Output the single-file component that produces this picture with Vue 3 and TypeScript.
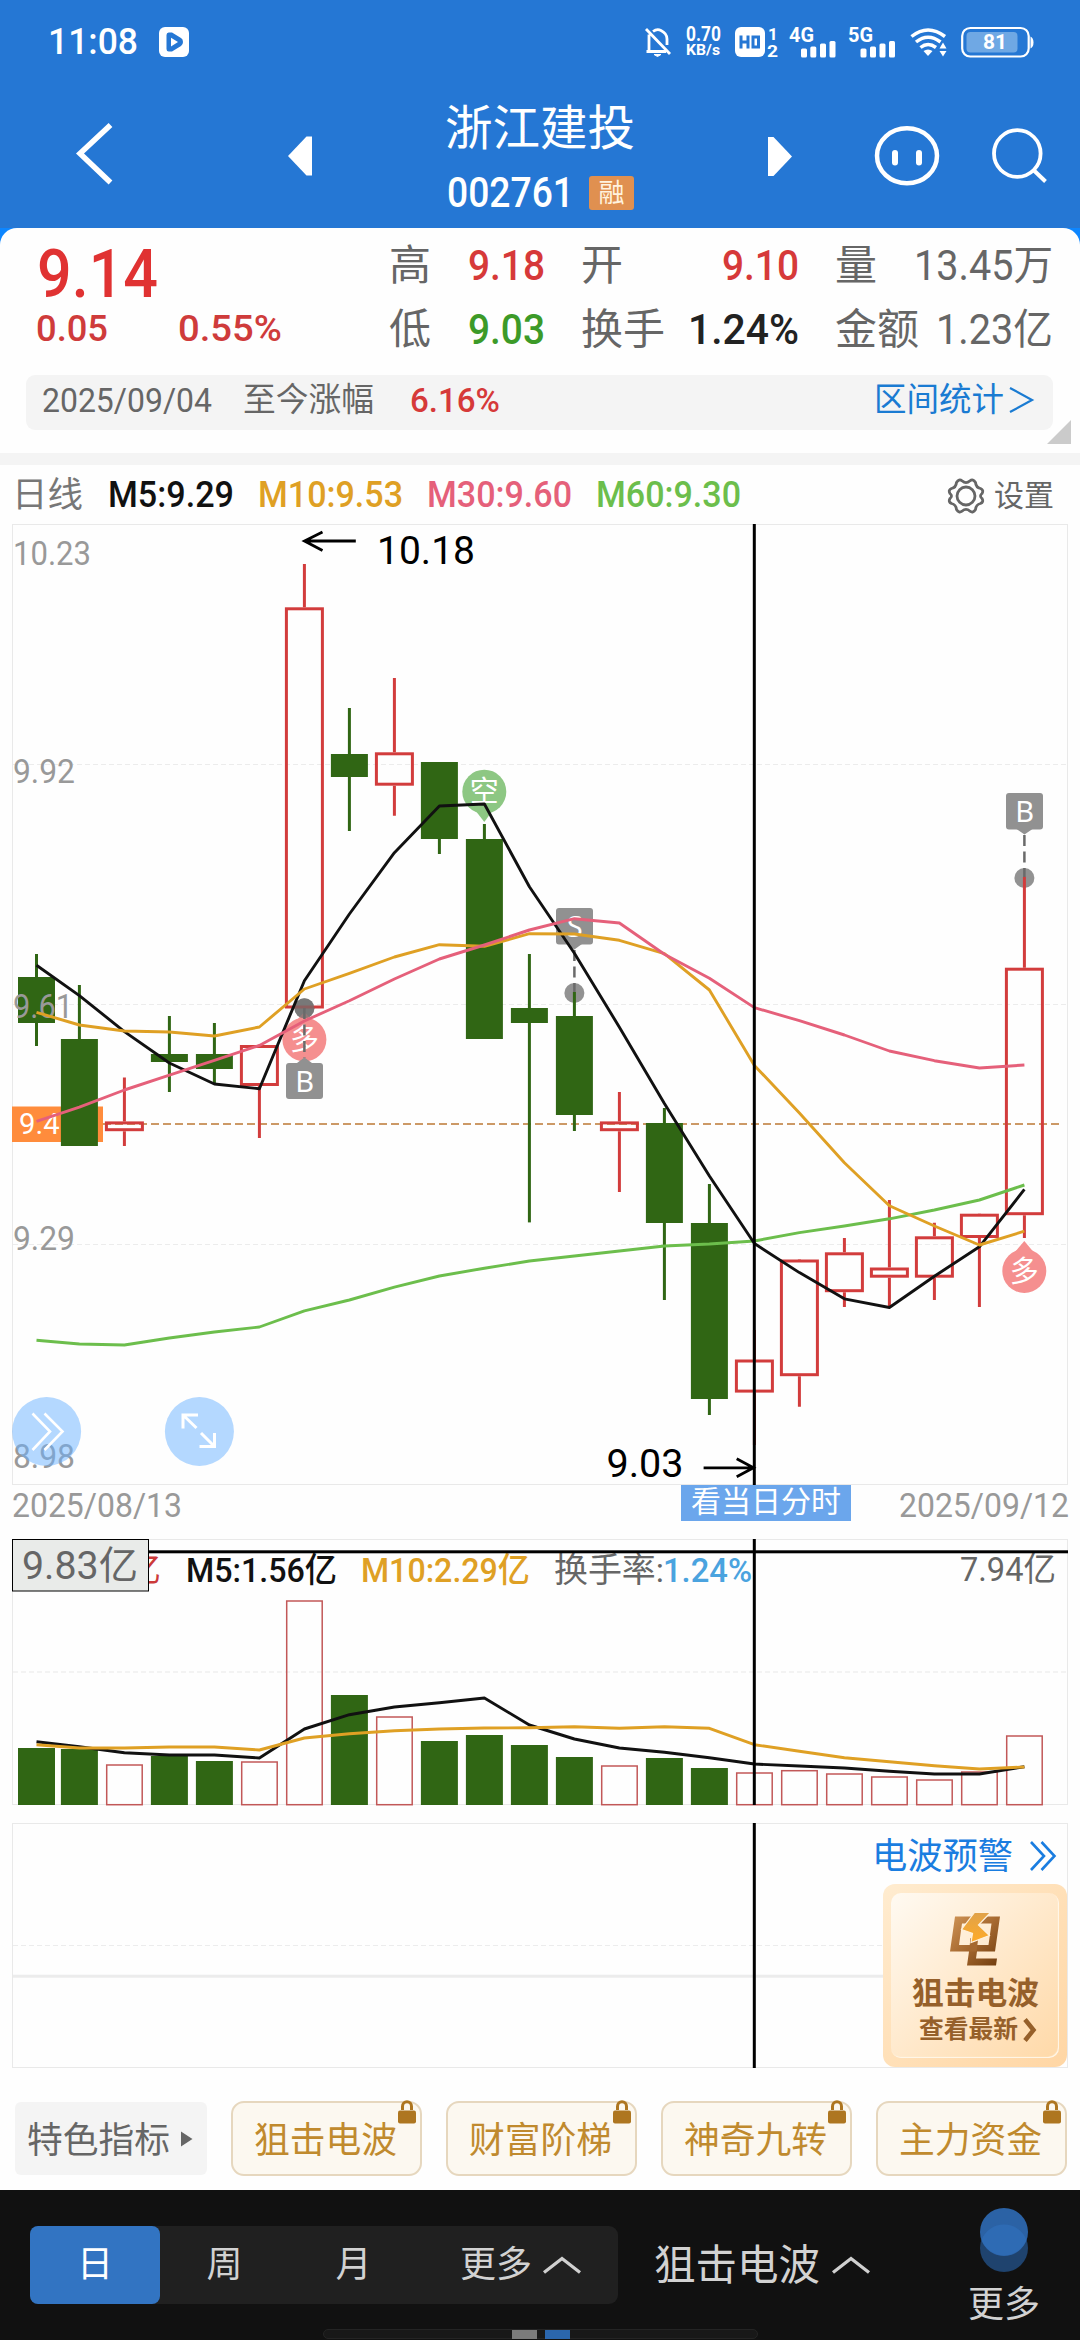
<script setup lang="ts">
type Candle = [up: boolean, high: number, top: number, bottom: number, low: number]

// Stretches or condenses a text run to a fixed width while keeping it in flow.
const vFit = {
  mounted(el: HTMLElement, binding: { value: number }) {
    const natural = el.getBoundingClientRect().width
    if (!natural) return
    el.style.transform = `scaleX(${binding.value / natural})`
    el.style.marginRight = `${binding.value - natural}px`
  },
}

const candles: Candle[] = [
  [false, 954, 977, 1023, 1046],
  [false, 985, 1039, 1146, 1146],
  [true, 1077.4, 1121.4, 1131.2, 1146],
  [false, 1016, 1054, 1062, 1092],
  [false, 1023, 1054, 1069, 1084],
  [true, 1045, 1045, 1086, 1138],
  [true, 564, 607.3, 1008.5, 1008],
  [false, 708, 754, 777, 831],
  [true, 678, 752.3, 785.7, 815.7],
  [false, 762, 762, 839, 854],
  [false, 824, 839, 1039, 1039],
  [false, 954, 1008, 1023, 1222.4],
  [false, 992, 1016, 1115, 1131],
  [true, 1092, 1121.4, 1131.2, 1192],
  [false, 1108, 1123, 1223, 1300],
  [false, 1184, 1223, 1399, 1415],
  [true, 1330, 1359.5, 1392.6, 1445],
  [true, 1260, 1259.5, 1376.2, 1406.7],
  [true, 1238, 1252.3, 1292.2, 1307],
  [true, 1200, 1267.5, 1277.7, 1307],
  [true, 1222.8, 1236.3, 1277.7, 1300],
  [true, 1214, 1213.7, 1238, 1307],
  [true, 876.7, 967.7, 1215.2, 1238],
]
const cx = (i: number): number => (i === 0 ? 36.5 : 79.4 + 45 * (i - 1))
const line = (ys: number[]): string => ys.map((y, i) => `${cx(i).toFixed(1)},${y}`).join(' ')

const ma5 = line([965.3, 995.6, 1031.6, 1063, 1084, 1088.7, 980.7, 914, 852.7, 806, 804, 886.7, 953.3, 1027.2, 1103.6, 1176, 1243.5, 1272.6, 1298.8, 1307.5, 1276.2, 1246.8, 1189.4])
const ma10 = line([1012.3, 1025, 1031, 1032, 1036, 1027, 989, 973.3, 957, 944.7, 946.3, 933.7, 934, 940.3, 953.7, 990, 1065.4, 1113, 1162.8, 1205.7, 1226, 1245, 1231.2])
const ma30 = line([1121.4, 1107.2, 1090, 1075.2, 1060.3, 1045.4, 1021, 1000.7, 979, 959, 945, 930, 918.7, 923, 954.3, 978.3, 1007.6, 1020.7, 1035, 1051, 1060.7, 1068, 1065])
const ma60 = line([1340.2, 1344, 1345, 1338, 1332, 1327, 1310.8, 1300, 1287.2, 1276, 1268.2, 1261, 1256, 1251, 1246, 1244, 1241, 1232.6, 1226, 1218.8, 1210, 1200, 1185])

const volumeTops = [1748, 1749, 1764.3, 1756, 1761, 1761.3, 1600.3, 1695, 1716.3, 1741, 1735, 1745, 1757, 1765.3, 1758, 1768, 1772.3, 1770, 1773.3, 1776.3, 1779.3, 1771.3, 1735.3]
const vol5 = line([1741.7, 1746.7, 1752.7, 1755, 1755, 1758, 1729, 1714.7, 1707, 1702.7, 1698, 1725, 1739, 1748, 1752.3, 1757.7, 1764, 1766, 1768, 1771.3, 1774, 1774, 1766.7])
const vol10 = line([1744.7, 1748, 1748, 1747, 1747, 1750, 1738, 1733.7, 1730.7, 1729, 1728, 1727.7, 1726.7, 1728.3, 1726.7, 1728.3, 1744.7, 1751.3, 1757.7, 1761.7, 1765.7, 1769, 1767])

const axis = [
  { t: '10.23', y: 565, w: 78 },
  { t: '9.92', y: 783, w: 62 },
  { t: '9.61', y: 1017.5, w: 60 },
  { t: '9.29', y: 1250, w: 62 },
  { t: '8.98', y: 1467.5, w: 62 },
]
const legend = [
  { t: 'M5:9.29', c: 'k', w: 126 },
  { t: 'M10:9.53', c: 'o', w: 145 },
  { t: 'M30:9.60', c: 'p', w: 145 },
  { t: 'M60:9.30', c: 'g', w: 145 },
]
const stats = [
  { l: '高', v: '9.18', c: 'red', w: 77 },
  { l: '开', v: '9.10', c: 'red', w: 77 },
  { l: '量', v: '13.45万', c: 'grey', w: 139 },
  { l: '低', v: '9.03', c: 'green', w: 77 },
  { l: '换手', v: '1.24%', c: 'dark', w: 111 },
  { l: '金额', v: '1.23亿', c: 'grey', w: 117 },
]
const locked = ['狙击电波', '财富阶梯', '神奇九转', '主力资金']
</script>

<template>
  <div class="screen">
    <div class="status">
      <span v-fit="90" class="fit clock">11:08</span>
      <svg class="app-ico" width="30" height="30" viewBox="0 0 30 30">
        <rect width="30" height="30" rx="6" fill="#fff" />
        <path d="M7.500 8q0-2.500 2.200-2.500h3.300l9 5.500q2 1.200 2 4t-2 4l-9 5.500h-3.300q-2.200 0-2.200-2.500z" fill="#2577d4" />
        <path d="M12 10.800v8.600l7-4.300z" fill="#fff" />
      </svg>
      <div class="icons">
        <svg width="28" height="32" viewBox="0 0 28 32" fill="none" stroke="#fff" stroke-width="2.800">
          <path d="M2 3L26 28M5 8.500V25M2.500 25.500H22M9 5.500Q13 2.500 17 4.500Q23 7.500 23 13V19" />
          <path d="M10 28.500h7l-3.500 2z" fill="#fff" stroke-width="1" />
        </svg>
        <div class="speed"><span v-fit="35" class="fit">0.70</span><span v-fit="34" class="fit small">KB/s</span></div>
        <svg width="43" height="32" viewBox="0 0 43 32">
          <rect x="0" y="1" width="30" height="30" rx="6" fill="#fff" />
          <path d="M6 9.500v13M13 9.500v13M6 16h7M18 11h5.500v10h-5.500z" stroke="#2577d4" stroke-width="3" fill="none" />
          <text x="33" y="14" class="tiny" font-size="17">1</text>
          <text x="32" y="30.500" class="tiny" font-size="16" textLength="11" lengthAdjust="spacingAndGlyphs">2</text>
        </svg>
        <svg class="cell" width="48" height="32" viewBox="0 0 48 32">
          <text x="0" y="16" class="tiny" font-size="20" textLength="25" lengthAdjust="spacingAndGlyphs">4G</text>
          <g fill="#fff"><rect x="12" y="22.500" width="6" height="9" rx="1.500" /><rect x="21.300" y="20.500" width="6" height="11" rx="1.500" /><rect x="31" y="17.500" width="6" height="14" rx="1.500" /><rect x="40.500" y="15" width="6" height="16.500" rx="1.500" /></g>
        </svg>
        <svg class="cell" width="48" height="32" viewBox="0 0 48 32">
          <text x="0" y="16" class="tiny" font-size="20" textLength="25" lengthAdjust="spacingAndGlyphs">5G</text>
          <g fill="#fff"><rect x="12.500" y="22.500" width="6" height="9" rx="1.500" /><rect x="22" y="20.500" width="6" height="11" rx="1.500" /><rect x="31.500" y="17.500" width="6" height="14" rx="1.500" /><rect x="41" y="15" width="6" height="16.500" rx="1.500" /></g>
        </svg>
        <svg width="38" height="32" viewBox="0 0 38 32" fill="none" stroke="#fff" stroke-width="3.500">
          <path d="M1.500 10.500Q18 -2.500 35 10.500M6 16Q18 6.500 30.500 16M10.500 21.500Q18 15.500 26 21.500" />
          <path d="M13.500 25Q18 22 22.500 25L18 30z" fill="#fff" stroke="none" />
          <path d="M29.500 22.500l3.500-6 3.500 6zM29.500 25l3.500 5.500 3.500-5.500z" fill="#fff" stroke="none" />
        </svg>
        <svg class="battery" width="73" height="32" viewBox="0 0 73 32">
          <rect x="1.200" y="2" width="66.500" height="28.500" rx="8" fill="none" stroke="#fff" stroke-width="2.200" />
          <path d="M69.500 10.500q3 1.500 3 6t-3 6z" fill="#fff" />
          <rect x="5.500" y="6" width="51" height="20.500" rx="4" fill="#6fa8e4" />
          <text x="34" y="23" text-anchor="middle" class="tiny" font-size="20" textLength="24" lengthAdjust="spacingAndGlyphs">81</text>
        </svg>
      </div>
    </div>

    <header class="head">
      <svg width="40" height="70" viewBox="74 119 40 70"><path d="M110.500 125L80 153.500l30.500 29" fill="none" stroke="#fff" stroke-width="5.500" /></svg>
      <svg class="prev" width="24" height="40" viewBox="0 0 24 40"><path d="M0 20L18.500.500H24v39h-5.500z" fill="#fff" /></svg>
      <div class="title">
        <div v-fit="190" class="fit name">浙江建投</div>
        <div class="code"><span v-fit="127" class="fit">002761</span><b>融</b></div>
      </div>
      <svg class="next" width="24" height="40" viewBox="0 0 24 40"><path d="M24 20.500L5.500 1H0v39h5.500z" fill="#fff" /></svg>
      <svg class="face" width="66" height="62" viewBox="874 125 66 62"><ellipse cx="907" cy="155.800" rx="30" ry="27.500" fill="none" stroke="#fff" stroke-width="4.500" /><rect x="892" y="150" width="6" height="15.500" rx="3" fill="#fff" /><rect x="916" y="150" width="6" height="15.500" rx="3" fill="#fff" /></svg>
      <svg class="find" width="56" height="58" viewBox="991 127 56 58"><circle cx="1017.300" cy="153.500" r="23.300" fill="none" stroke="#fff" stroke-width="3.800" /><path d="M1034 170.500L1045.500 181.500" stroke="#fff" stroke-width="4" /></svg>
    </header>

    <section class="corner"><div class="quote">
      <div class="summary">
        <div class="last">
          <div v-fit="121" class="fit big">9.14</div>
          <div class="chg"><span v-fit="72" class="fit">0.05</span><span v-fit="104" class="fit pct">0.55%</span></div>
        </div>
        <div class="stats">
          <div v-for="s in stats" :key="s.l" class="stat"><span>{{ s.l }}</span><span v-fit="s.w" class="fit r" :class="s.c">{{ s.v }}</span></div>
        </div>
      </div>
      <div class="interval">
        <span v-fit="170" class="fit">2025/09/04</span>
        <span v-fit="131" class="fit since">至今涨幅</span>
        <span v-fit="90" class="fit red six">6.16%</span>
        <span class="link"><span v-fit="130" class="fit">区间统计</span><svg width="26" height="28" viewBox="0 0 26 28"><path d="M1 2L23 14L1 26" fill="none" stroke="#1a7bd2" stroke-width="2.200" /></svg></span>
      </div>
      <i class="fold"></i>
    </div></section>
    <div class="strip"></div>

    <div class="legend">
      <span v-fit="71" class="fit day">日线</span>
      <span v-for="l in legend" :key="l.t" v-fit="l.w" class="fit ma" :class="l.c">{{ l.t }}</span>
      <span class="set">
        <svg width="38" height="38" viewBox="-19 -19 38 38" fill="none" stroke="#666" stroke-width="2.800"><circle r="9" /><path d="M-4 -15.200Q0 -11.600 4 -15.200Q7 -17.500 9.500 -13.500Q10 -8.500 14.500 -7.500Q18 -6 16 -2.500Q13 0 16 2.500Q18 6 14.500 7.500Q10 8.500 9.500 13.500Q7 17.500 4 15.200Q0 11.600 -4 15.200Q-7 17.500 -9.500 13.500Q-10 8.500 -14.500 7.500Q-18 6 -16 2.500Q-13 0 -16 -2.500Q-18 -6 -14.500 -7.500Q-10 -8.500 -9.500 -13.500Q-7 -17.500 -4 -15.200z" /></svg>
        <span v-fit="60" class="fit">设置</span>
      </span>
    </div>

    <svg class="chart" width="1080" height="961" viewBox="0 524 1080 961">
      <rect x="12.500" y="524.500" width="1055" height="960" class="frame" />
      <path d="M13 764.500H1067M13 1004.500H1067M13 1244.500H1067" class="grid" />
      <rect x="12" y="1106.500" width="91" height="35.500" fill="#ff8c3c" />
      <text x="19" y="1134" class="tag" textLength="57" lengthAdjust="spacingAndGlyphs">9.45</text>
      <path d="M103 1124H1062" stroke="#cc9966" stroke-width="2" stroke-dasharray="8 4" />

      <g fill="#6e6e6e" fill-opacity=".75">
        <circle :cx="cx(6)" cy="1008.300" r="10" /><circle :cx="cx(12)" cy="993" r="10" /><circle :cx="cx(22)" cy="878" r="10" />
      </g>
      <template v-for="(c, i) in candles" :key="i">
        <g v-if="c[0]" stroke="#d23c3c" stroke-width="3" fill="none">
          <path :d="`M${cx(i)} ${c[1]}V${c[2]}M${cx(i)} ${c[3]}V${c[4]}`" />
          <rect :x="cx(i) - 18" :y="c[2] + 1.5" width="36" :height="c[3] - c[2] - 3" />
        </g>
        <g v-else fill="#306614">
          <rect :x="cx(i) - 1.500" :y="c[1]" width="3" :height="c[4] - c[1]" />
          <rect :x="cx(i) - 18.500" :y="c[2]" width="37" :height="c[3] - c[2]" />
        </g>
      </template>
      <text v-for="a in axis" :key="a.t" x="13" :y="a.y" class="axis" :textLength="a.w" lengthAdjust="spacingAndGlyphs">{{ a.t }}</text>

      <g class="bubble">
        <path d="M475 810L484.300 822L493 810z" fill="#8dc783" /><circle cx="484.300" cy="791.700" r="22" fill="#8dc783" /><text x="484.300" y="802">空</text>
        <circle cx="304.400" cy="1039.500" r="22" fill="#f58f8f" /><path d="M295 1022L304.400 1012L314 1022z" fill="#f58f8f" /><text x="304.400" y="1050">多</text>
        <path d="M1015 1252L1024.300 1241L1033.500 1252z" fill="#f58f8f" /><circle cx="1024.300" cy="1271" r="22" fill="#f58f8f" /><text x="1024.300" y="1281.500">多</text>
      </g>
      <circle :cx="cx(6)" cy="1008.300" r="10" fill="#6e6e6e" fill-opacity=".7" />
      <g stroke="#6a6a6a" stroke-width="2.500" stroke-dasharray="11 5.500">
        <path d="M304.400 1008V1058M574.400 950V992M1024.400 835V877" />
      </g>
      <g class="mark">
        <path d="M297 1063l7.400-5.500 7.600 5.500zM567 944l7.400 5.500 7.600-5.500zM1016.500 829l8 5.500 8-5.500z" />
        <rect x="286" y="1063" width="37" height="36" rx="3" /><text x="304.600" y="1092">B</text>
        <rect x="556" y="908" width="37" height="36.500" rx="3" /><text x="574.600" y="937">S</text>
        <rect x="1006" y="793" width="37" height="36.500" rx="3" /><text x="1024.600" y="822">B</text>
      </g>

      <g fill="none" stroke-width="2.900" stroke-linejoin="round">
        <polyline :points="ma60" stroke="#6cbe4c" />
        <polyline :points="ma5" stroke="#111" />
        <polyline :points="ma10" stroke="#dfa024" />
        <polyline :points="ma30" stroke="#e5607a" />
      </g>

      <path d="M355.800 541H304.500M322.500 532L304.500 541L322.500 550.500M703.600 1467.800H754M736.700 1458.700L753.500 1467.800L736.700 1476.800" fill="none" stroke="#000" stroke-width="2.800" />
      <text x="377" y="564" class="extreme" textLength="98" lengthAdjust="spacingAndGlyphs">10.18</text>
      <text x="606.500" y="1476.500" class="extreme" textLength="77" lengthAdjust="spacingAndGlyphs">9.03</text>
      <rect x="752.800" y="524" width="3" height="961" />

      <g fill="#6ab1ff" fill-opacity=".5"><circle cx="46.600" cy="1431.500" r="34.500" /><circle cx="199.400" cy="1431.500" r="34.500" /></g>
      <g fill="none" stroke="#fff" stroke-width="2.600">
        <path d="M32.500 1413.500L50 1431.500L32.500 1450M44.500 1413.500L62.500 1431.500L44.500 1450" />
        <path d="M198 1415H183V1428.500M183 1415L196.500 1428M199.500 1446.500H214.500V1433M214.500 1446.500L201 1433" stroke-width="3" />
      </g>
    </svg>

    <div class="dates"><span v-fit="170" class="fit">2025/08/13</span><span class="today"><span v-fit="150" class="fit">看当日分时</span></span><span v-fit="170" class="fit">2025/09/12</span></div>

    <svg class="chart" width="1080" height="267" viewBox="0 1539 1080 267">
      <rect x="12.500" y="1539.500" width="1055" height="265" class="frame" />
      <path d="M13 1672H1067" class="grid half" />
      <template v-for="(t, i) in volumeTops" :key="i">
        <rect v-if="candles[i][0]" :x="cx(i) - 17.700" :y="t + .7" width="35.500" :height="1804 - t" fill="none" stroke="#c25858" stroke-width="1.500" />
        <rect v-else :x="cx(i) - 18.500" :y="t" width="37" :height="1805 - t" fill="#306614" />
      </template>
      <g fill="none" stroke-width="2.900" stroke-linejoin="round">
        <polyline :points="vol5" stroke="#111" /><polyline :points="vol10" stroke="#dfa024" />
      </g>
      <g class="vtext">
        <text x="127" y="1581.500" fill="#cc3a3a">亿</text>
        <text x="186" y="1581.500" fill="#111" class="m" textLength="151" lengthAdjust="spacingAndGlyphs">M5:1.56亿</text>
        <text x="361" y="1581.500" fill="#dfa024" class="m" textLength="169" lengthAdjust="spacingAndGlyphs">M10:2.29亿</text>
        <text x="554" y="1581.500" fill="#666" textLength="110" lengthAdjust="spacingAndGlyphs">换手率:</text>
        <text x="663" y="1581.500" fill="#4aa3df" class="m" textLength="89" lengthAdjust="spacingAndGlyphs">1.24%</text>
        <text x="960" y="1581" fill="#666" textLength="96" lengthAdjust="spacingAndGlyphs">7.94亿</text>
      </g>
      <rect x="149" y="1550.300" width="919" height="3" /><rect x="752.800" y="1539" width="3" height="266" />
      <rect x="12.500" y="1539.500" width="136" height="51.500" fill="#e9ebe9" stroke="#000" />
      <text x="22" y="1579" class="cursor" textLength="116" lengthAdjust="spacingAndGlyphs">9.83亿</text>
    </svg>

    <section class="alert">
      <svg width="1080" height="246" viewBox="0 1823 1080 246">
        <rect x="12.500" y="1823.500" width="1055" height="244" class="frame" />
        <path d="M13 1945.500H1067" class="grid" /><path d="M13 1976.300H1067" stroke="#ececec" stroke-width="3" /><rect x="752.800" y="1823" width="3" height="245" />
      </svg>
      <div class="alert-side">
        <div class="alert-link"><span v-fit="141" class="fit">电波预警</span><svg width="28" height="32" viewBox="0 0 28 32" fill="none" stroke="#1a7de0" stroke-width="2.600"><path d="M2 2L15 16L2 30M12.500 2L25.500 16L12.500 30" /></svg></div>
        <div class="card"><div class="inner">
          <svg width="52" height="56" viewBox="0 0 52 56">
            <defs><linearGradient id="brown" x1="0" y1="0" x2="1" y2="1"><stop offset="0" stop-color="#d09456" /><stop offset=".5" stop-color="#a5682f" /><stop offset="1" stop-color="#6f3c0e" /></linearGradient><linearGradient id="gold" x1="0" y1="0" x2="0" y2="1"><stop offset="0" stop-color="#e0a24a" /><stop offset="1" stop-color="#ffab28" /></linearGradient></defs>
            <path d="M6 5.500H51L46 40.500H28L27 47.500H48L47 54.500H18L20 40.500H1zM13 12.500L10 34H39.500L42.500 12.500z" fill="url(#brown)" fill-rule="evenodd" />
            <path d="M21.500 27L20 40.500H27.500L29 29z" fill="#a5682f" />
            <path d="M25.500 1.500H41.500L29.500 14L40.500 24.500L22 31.500L23.500 22.500L12.500 18.500z" fill="url(#gold)" stroke="#fff1dc" stroke-width="1.200" />
          </svg>
          <div v-fit="127" class="fit c1">狙击电波</div>
          <div class="c2"><span v-fit="99" class="fit">查看最新</span><svg width="14" height="26" viewBox="0 0 14 26"><path d="M2 2.500L10.500 13L2 23.500" fill="none" stroke="#96602a" stroke-width="4.500" /></svg></div>
        </div></div>
      </div>
    </section>

    <div class="pills">
      <div class="feature"><span v-fit="143" class="fit lbl">特色指标</span><svg width="12" height="16" viewBox="0 0 12 16"><path d="M0 .500L11.500 8L0 15.500z" fill="#666" /></svg></div>
      <div v-for="p in locked" :key="p" class="pill"><span v-fit="143" class="fit lbl">{{ p }}</span><svg width="18" height="24" viewBox="0 0 18 24"><path d="M4.500 10V6.500a4.500 4.800 0 0 1 9 0V10" fill="none" stroke="#ae7620" stroke-width="3" /><rect y="10.500" width="18" height="13" rx="2" fill="#ae7620" /></svg></div>
    </div>

    <footer class="nav">
      <div class="seg">
        <span class="on">日</span><span>周</span><span>月</span>
        <span class="more">更多<svg width="40" height="20" viewBox="0 0 40 20"><path d="M2 17.500L20 3.500L38 17.500" fill="none" stroke="#d0d0d0" stroke-width="3.300" /></svg></span>
      </div>
      <div class="ind"><span v-fit="166" class="fit">狙击电波</span><svg width="40" height="20" viewBox="0 0 40 20"><path d="M2 17.500L20 3.500L38 17.500" fill="none" stroke="#d0d0d0" stroke-width="3.300" /></svg></div>
      <div class="extra">
        <svg width="48" height="64" viewBox="0 0 48 64"><circle cx="24" cy="40" r="24" fill="#1f436e" /><circle cx="24" cy="24" r="24" fill="#2b62a5" /><path d="M1.600 32A24 24 0 0 1 46.400 32A24 24 0 0 1 1.600 32z" fill="#2e6bb4" /></svg>
        <span>更多</span>
      </div>
      <div class="pager"><i></i><i class="cur"></i></div>
    </footer>
  </div>
</template>

<style>
body { margin: 0; background: #fff; }
</style>

<style scoped>
.screen { width: 1080px; height: 2340px; overflow: hidden; position: relative; background: #fefefe; font-family: Roboto, "Noto Sans CJK SC", sans-serif; color: #666; display: flex; flex-direction: column; }
.screen > * { flex: none; }
svg { display: block; flex: none; overflow: visible; }
.fit { display: inline-block; white-space: nowrap; transform-origin: 0 50%; flex: none; }
.status { height: 84px; background: #2577d4; color: #fff; display: flex; align-items: center; padding: 0 46px 0 48px; box-sizing: border-box; }
.clock { font-size: 37px; font-weight: 500; line-height: 84px; }
.app-ico { margin-left: 21px; }
.icons { margin-left: auto; display: flex; align-items: center; }
.icons > * + * { margin-left: 14px; }
.speed { width: 35px; display: flex; flex-direction: column; align-items: flex-start; font-size: 19.5px; line-height: 16px; font-weight: 700; }
.speed .small { font-size: 15.5px; line-height: 14px; }
.icons .cell { margin-left: 11px; }
.icons .battery { margin-left: 13px; }
.tiny { fill: #fff; font-weight: 700; }
.head { height: 144px; background: #2577d4; color: #fff; display: flex; box-sizing: border-box; padding-left: 74px; align-items: flex-start; }
.head > svg:first-child { margin-top: 35px; }
.prev { margin: 51.5px 0 0 174px; }
.title { width: 190px; margin-left: 133px; margin-top: 10px; }
.name { font-size: 48px; line-height: 70px; height: 70px; display: block; width: max-content; }
.code { display: flex; align-items: center; height: 60px; margin-top: -1px; padding-left: 2px; line-height: 60px; font-size: 42px; font-weight: 500; }
.code b { font-weight: 400; font-size: 26px; line-height: 34px; width: 45px; text-align: center; background: #e09050; color: #fff3df; border-radius: 3px; margin-left: 15px; }
.next { margin: 52px 0 0 133px; }
.face { margin: 41px 0 0 82px; }
.find { margin: 43px 0 0 51px; }
.corner { background: #0d86ff; }
.quote { height: 225px; background: #fefefe; border-radius: 17px 17px 0 0; box-sizing: border-box; padding: 5px 27px 0 26px; position: relative; }
.summary { display: flex; height: 142px; }
.last { width: 365px; color: #e03232; padding-left: 10px; box-sizing: border-box; }
.big { display: block; width: max-content; font-size: 66px; font-weight: 500; line-height: 68px; height: 71px; padding-top: 8px; box-sizing: border-box; padding-bottom: 0; height: 77px; margin-left: 1px; }
.chg { display: flex; color: #cf3b3b; font-size: 37.5px; font-weight: 500; line-height: 36px; }
.pct { margin-left: 70px; }
.stats { display: grid; grid-template-columns: 156px 218px 218px; column-gap: 36px; grid-auto-rows: 64px; line-height: 66px; font-size: 42px; margin-left: -2px; margin-right: -4px; }
.stat { display: flex; justify-content: space-between; }
.stat .fit { font-weight: 500; }
.stat .grey { font-weight: 400; }
.red { color: #d63939; } .green { color: #3c9a28; } .dark { color: #222; }
.interval { height: 55px; box-sizing: border-box; background: #f4f4f4; border-radius: 9px; display: flex; align-items: center; padding: 0 18px 5px 16px; font-size: 34px; line-height: 50px; }
.since { margin-left: 31px; font-size: 33px; } .six { margin-left: 36px; font-weight: 500; }
.link { margin-left: auto; display: flex; align-items: center; gap: 5px; color: #1a7bd2; font-size: 33px; }
.fold { position: absolute; right: 9px; bottom: 9px; border: 12px solid transparent; border-right-color: #cbcbcb; border-bottom-color: #cbcbcb; }
.strip { height: 12px; background: #f4f4f4; }
.legend { height: 59px; box-sizing: border-box; display: flex; align-items: center; padding: 2px 26px 0 12px; font-size: 36px; line-height: 57px; }
.day { color: #777; font-size: 35px; }
.ma { font-weight: 500; margin-left: 24px; }
.day + .ma { margin-left: 25px; }
.k { color: #111; } .o { color: #dfa024; } .p { color: #e5607a; } .g { color: #6cbe4c; }
.set { margin-left: auto; display: flex; align-items: center; gap: 9px; font-size: 30px; }
.frame { fill: none; stroke: #e9e9e9; }
.grid { fill: none; stroke: #ececec; stroke-dasharray: 5 3; }
.half { stroke: #f3f3f3; stroke-width: 2; }
.tag { fill: #fff; font-size: 29px; }
.axis { fill: #999; font-size: 34px; }
.bubble text { fill: #fff; font-size: 29px; text-anchor: middle; }
.mark { fill: #919191; }
.mark text { fill: #fff; font: 29px "Noto Sans", sans-serif; text-anchor: middle; }
.extreme { fill: #000; font-size: 38px; }
.dates { height: 54px; display: flex; padding: 0 11px 0 12px; align-items: flex-start; line-height: 40px; font-size: 34px; color: #999; }
.today { margin-left: 499px; margin-right: auto; width: 170px; height: 35.5px; line-height: 33px; background: #6ba6ec; color: #fff; font-size: 30px; box-sizing: border-box; padding-left: 10px; }
.vtext { font-size: 34px; } .vtext .m { font-weight: 500; }
.cursor { fill: #666; font-size: 39px; }
.alert { margin-top: 17px; position: relative; height: 246px; }
.alert-side { position: absolute; right: 13px; top: 0; display: flex; flex-direction: column; align-items: flex-end; }
.alert-link { height: 61px; display: flex; align-items: center; gap: 16px; color: #1a7de0; font-size: 36px; line-height: 54px; padding-right: 10px; box-sizing: border-box; padding-top: 7px; }
.alert-link svg { margin-top: -2px; }
.card { width: 184px; height: 183px; border-radius: 12px; background: linear-gradient(135deg, #ffecd0, #ffe0b8 50%, #ffd6a4); padding: 9px 8px; box-sizing: border-box; }
.inner { height: 165px; border-radius: 10px; background: linear-gradient(135deg, #fffaf2, #ffe9cc 50%, #ffd9a8); box-shadow: inset -1px -1px 1px #fff8ec; display: flex; flex-direction: column; align-items: center; color: #96602a; font-weight: 700; box-sizing: border-box; padding-top: 18px; }
.c1 { font-size: 31px; line-height: 36px; margin-top: 9px; }
.c2 { font-size: 24.5px; line-height: 30px; display: flex; align-items: center; gap: 5px; margin-top: 3px; padding-left: 5px; }
.pills { display: flex; height: 75px; margin-top: 32px; padding-left: 15px; align-items: center; font-size: 36px; line-height: 66px; }
.lbl { padding-top: 5px; }
.feature { width: 192px; height: 73px; background: #f4f4f4; border-radius: 6px; box-sizing: border-box; padding-left: 12px; display: flex; align-items: center; gap: 11px; }
.pill { width: 191px; height: 75px; box-sizing: border-box; margin-left: 24px; border: 2px solid #e6d7be; border-radius: 13px; background: #fcf8f0; color: #c08a2e; display: flex; align-items: center; padding-left: 21px; position: relative; }
.pill svg { position: absolute; right: 4px; top: -3px; }
.nav { margin-top: 14px; height: 150px; background: #111; display: flex; position: relative; color: #d2d2d2; }
.seg { margin: 36px 0 0 30px; width: 588px; height: 78px; border-radius: 9px; background: #202020; display: flex; font-size: 36px; line-height: 79px; }
.seg > span { width: 129px; text-align: center; }
.seg .on { width: 130px; background: #3274c2; color: #fff; border-radius: 8px; }
.seg .more { width: auto; flex: 1; display: flex; align-items: center; padding-left: 42px; gap: 10px; }
.ind { margin: 36px 0 0 36px; height: 78px; line-height: 79px; display: flex; align-items: center; gap: 11px; font-size: 42px; }
.extra { margin: 18px 0 0 97px; width: 72px; display: flex; flex-direction: column; align-items: center; font-size: 36px; line-height: 60px; gap: 3px; }
.extra span { white-space: nowrap; }
.pager { position: absolute; left: 323px; top: 139px; width: 433px; height: 8px; border: 1px solid #242424; border-radius: 5px; background: #181818; display: flex; justify-content: center; gap: 8px; }
.pager i { width: 25px; height: 9px; background: #7b7b7b; } .pager .cur { background: #2b66ad; }
</style>
